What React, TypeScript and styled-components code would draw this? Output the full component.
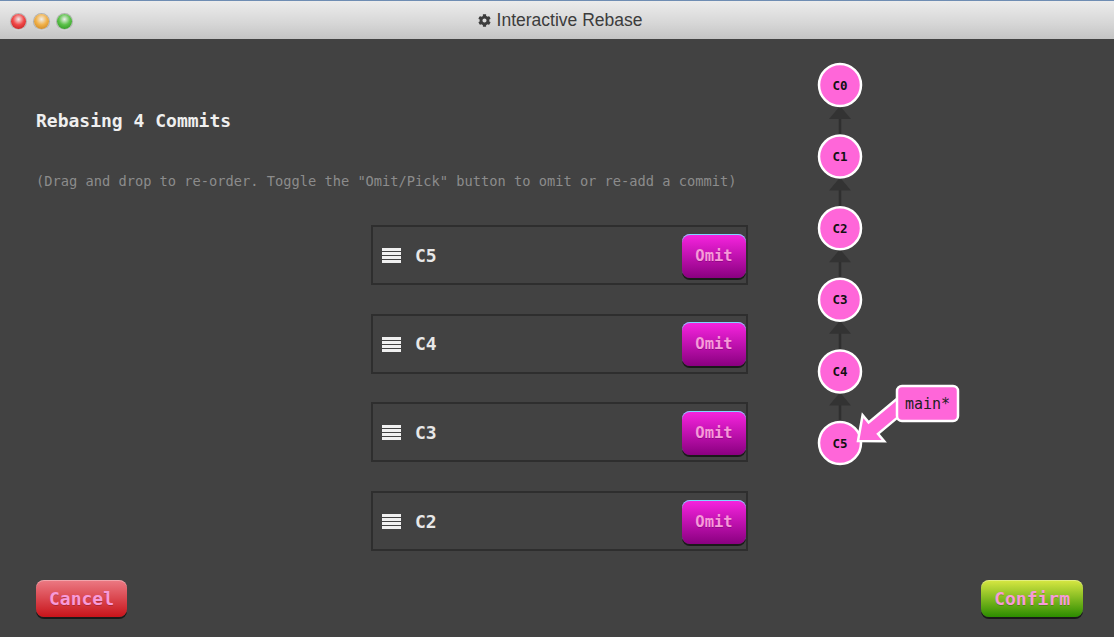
import React from "react";
import styled, { createGlobalStyle } from "styled-components";
import { FaCog } from "react-icons/fa";

const GlobalStyle = createGlobalStyle`
  html, body {
    margin: 0;
    padding: 0;
    background: #424242;
  }
  #root {
    width: 1114px;
    height: 637px;
  }
`;

const mono = `"DejaVu Sans Mono", "Liberation Mono", monospace`;

const Window = styled.div`
  width: 1114px;
  height: 637px;
  display: flex;
  flex-direction: column;
  background: #424242;
  overflow: hidden;
`;

const TitleBar = styled.header`
  height: 38px;
  flex: none;
  display: flex;
  align-items: center;
  border-top: 1px solid #6f8db3;
  background: linear-gradient(#ececec, #d6d6d6 60%, #c4c4c4);
`;

const Lights = styled.div`
  display: flex;
  gap: 8px;
  padding-left: 11px;
  margin-top: 2px;
`;

const Light = styled.span<{ $c: string; $d: string }>`
  width: 15px;
  height: 15px;
  border-radius: 50%;
  background: radial-gradient(circle at 50% 35%, #fff8 0, ${(p) => p.$c} 45%, ${(p) => p.$d} 100%);
  box-shadow: 0 0 0 1px #8888, 0 1px 1px #fff;
`;

const Title = styled.div`
  flex: 1;
  display: flex;
  justify-content: center;
  align-items: center;
  gap: 6px;
  margin-left: -66px;
  font-family: "Liberation Sans", Arial, sans-serif;
  font-size: 17.5px;
  color: #3c3c3c;
  svg {
    font-size: 13px;
  }
`;

const Body = styled.div`
  flex: 1;
  display: flex;
  flex-direction: column;
`;

const Upper = styled.div`
  flex: 1;
  display: flex;
`;

const Main = styled.section`
  flex: 1;
  padding: 71px 0 0 36px;
  display: flex;
  flex-direction: column;
`;

const Heading = styled.h2`
  margin: 0;
  font-family: ${mono};
  font-size: 18px;
  line-height: 22px;
  font-weight: bold;
  color: #efefef;
`;

const Hint = styled.p`
  margin: 40px 0 0;
  font-family: ${mono};
  font-size: 13.7px;
  line-height: 18px;
  color: #8c8c8c;
  white-space: nowrap;
`;

const List = styled.ul`
  list-style: none;
  margin: 35px 0 0 335px;
  padding: 0;
  display: flex;
  flex-direction: column;
  gap: 28.7px;
  width: 377px;
`;

const Row = styled.li`
  box-sizing: border-box;
  height: 60px;
  display: flex;
  align-items: center;
  gap: 14px;
  padding-left: 9px;
  border: 2px solid #2e2e2e;
  background: #424242;
`;

const Handle = styled.span`
  width: 19px;
  height: 15px;
  display: flex;
  flex-direction: column;
  justify-content: space-between;
  margin-top: 1px;
  i {
    display: block;
    height: 3px;
    background: #f0f0f0;
  }
`;

const Label = styled.span`
  flex: 1;
  font-family: ${mono};
  font-size: 18px;
  font-weight: bold;
  color: #e8e8e8;
`;

const Btn = styled.button<{ $top: string; $bottom: string }>`
  font-family: ${mono};
  font-weight: bold;
  color: #f79ad9;
  text-shadow: 0 1px 0 #0003;
  border: none;
  border-radius: 8px;
  background: linear-gradient(${(p) => p.$top}, ${(p) => p.$bottom});
  box-shadow: 0 2px 0 #1a1a1a, inset 0 1px 0 #ffffff55;
  cursor: pointer;
  padding: 0;
`;

const OmitBtn = styled(Btn)`
  width: 64px;
  height: 44px;
  font-size: 15.5px;
  margin-top: 1px;
  box-shadow: 0 2px 0 #1a1a1a, inset 0 1px 0 #7fd6ff;
`;

const Footer = styled.footer`
  display: flex;
  justify-content: space-between;
  padding: 0 31px 20px 36px;
`;

const BigBtn = styled(Btn)`
  height: 37px;
  font-size: 18px;
  padding: 0 13px;
`;

const GraphPane = styled.aside`
  width: 324px;
  flex: none;
`;

const commits = ["C5", "C4", "C3", "C2"];
const nodes = ["C0", "C1", "C2", "C3", "C4", "C5"];
const nx = 50;
const ny = (i: number) => 46 + i * 71.6;
const pink = "#ff66d9";

function Graph() {
  const ox = 790;
  const oy = 39;
  const arrow = [
    [858, 441],
    [862.6, 415.2],
    [868.6, 422.4],
    [899.4, 396.8],
    [908.8, 408.2],
    [878, 433.8],
    [884.2, 441.2],
  ]
    .map(([x, y]) => `${x - ox},${y - oy}`)
    .join(" ");
  return (
    <svg width="324" height="440" viewBox="0 0 324 440">
      {nodes.slice(1).map((n, i) => {
        const py = ny(i);
        const cy = ny(i + 1);
        return (
          <g key={n}>
            <line x1={nx} y1={cy} x2={nx} y2={py + 20} stroke="#2f2f2f" strokeWidth="2.5" />
            <polygon
              points={`${nx},${py + 21} ${nx - 11},${py + 34} ${nx + 11},${py + 34}`}
              fill="#333"
            />
          </g>
        );
      })}
      {nodes.map((n, i) => (
        <g key={n}>
          <circle cx={nx} cy={ny(i)} r="21" fill={pink} stroke="#fff" strokeWidth="2.5" />
          <text
            x={nx}
            y={ny(i) + 4.5}
            textAnchor="middle"
            fontFamily={mono}
            fontWeight="bold"
            fontSize="12.5"
            fill="#111"
          >
            {n}
          </text>
        </g>
      ))}
      <polygon points={arrow} fill={pink} stroke="#fff" strokeWidth="2.5" strokeLinejoin="miter" />
      <rect x="107" y="347" width="61" height="35" rx="5" fill={pink} stroke="#fff" strokeWidth="2.5" />
      <text x="137.5" y="370" textAnchor="middle" fontFamily={mono} fontSize="15" fill="#222">
        main*
      </text>
    </svg>
  );
}

export default function App() {
  return (
    <>
      <GlobalStyle />
      <Window>
        <TitleBar>
          <Lights>
            <Light $c="#f24848" $d="#b01818" />
            <Light $c="#f2b24a" $d="#c07a18" />
            <Light $c="#5cc24a" $d="#238a1a" />
          </Lights>
          <Title>
            <FaCog />
            Interactive Rebase
          </Title>
        </TitleBar>
        <Body>
          <Upper>
            <Main>
              <Heading>Rebasing 4 Commits</Heading>
              <Hint>
                (Drag and drop to re-order. Toggle the "Omit/Pick" button to omit or re-add a commit)
              </Hint>
              <List>
                {commits.map((c) => (
                  <Row key={c}>
                    <Handle>
                      <i />
                      <i />
                      <i />
                      <i />
                    </Handle>
                    <Label>{c}</Label>
                    <OmitBtn $top="#f824e0" $bottom="#8a0080">
                      Omit
                    </OmitBtn>
                  </Row>
                ))}
              </List>
            </Main>
            <GraphPane>
              <Graph />
            </GraphPane>
          </Upper>
          <Footer>
            <BigBtn $top="#ec7a84" $bottom="#c8141a">
              Cancel
            </BigBtn>
            <BigBtn $top="#d8e842" $bottom="#2c8c00">
              Confirm
            </BigBtn>
          </Footer>
        </Body>
      </Window>
    </>
  );
}
